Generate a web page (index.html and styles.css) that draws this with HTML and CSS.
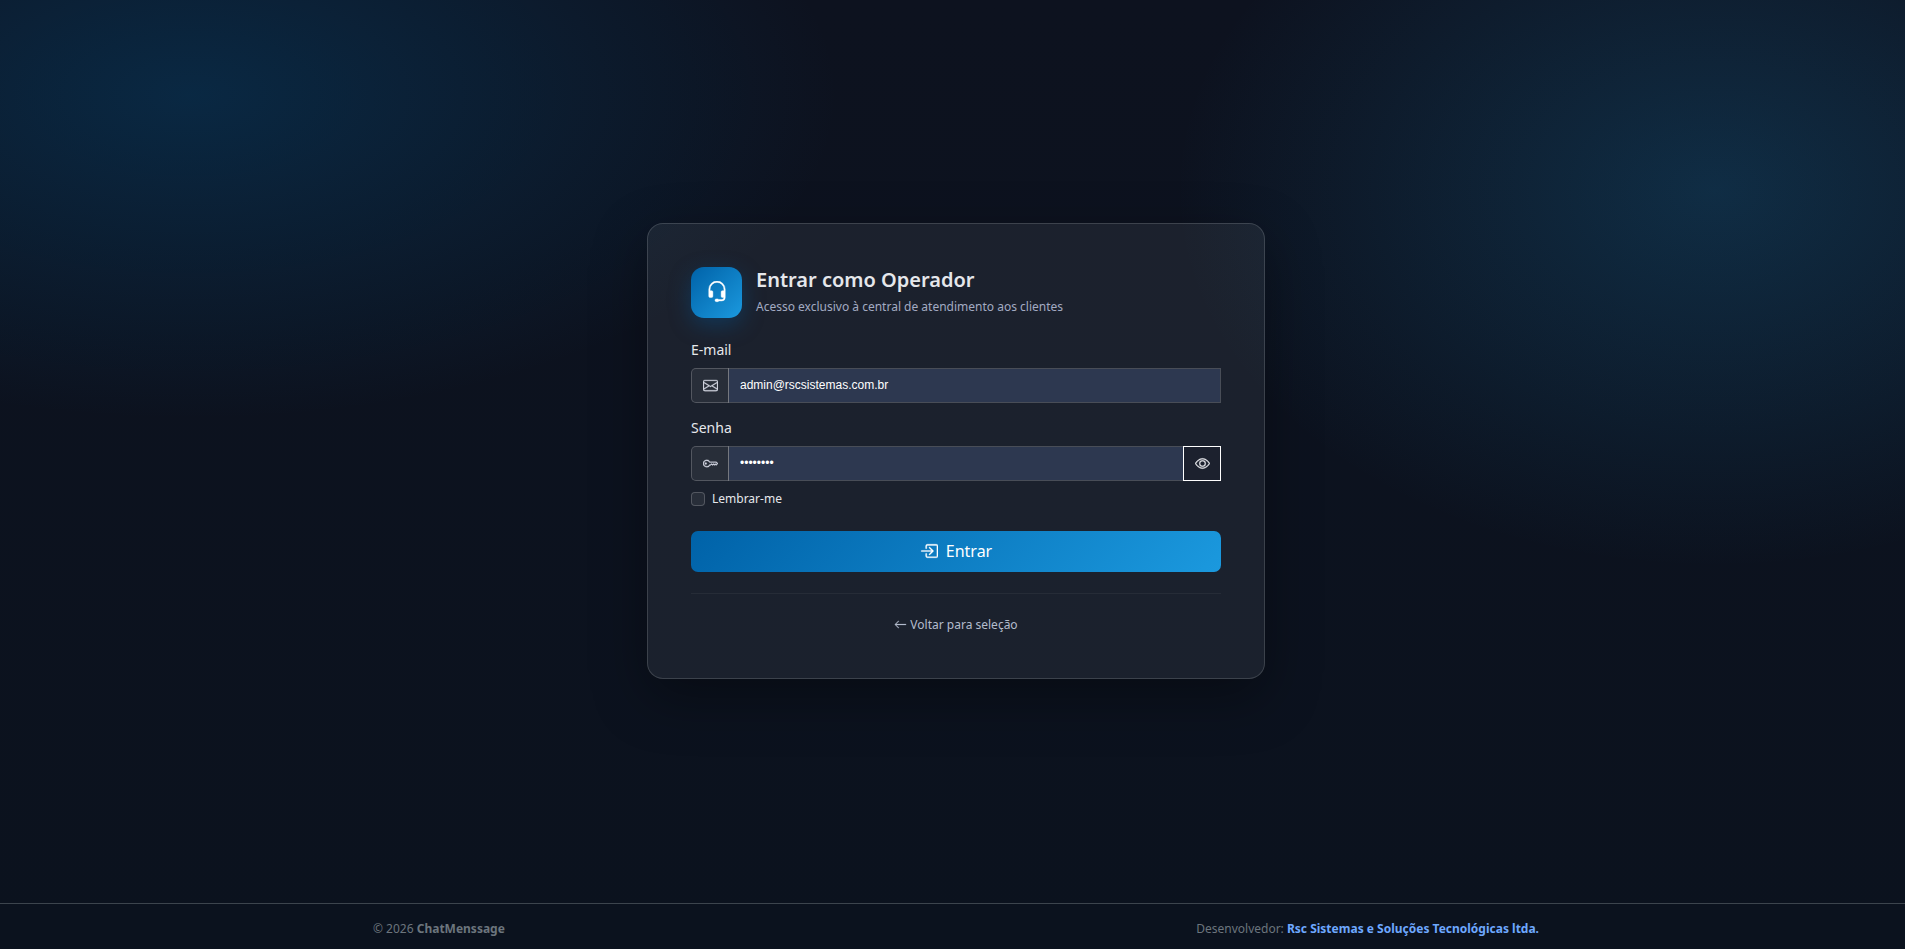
FILE: index.html
```html
<!DOCTYPE html>
<html lang="pt-BR">
<head>
<meta charset="UTF-8">
<meta name="viewport" content="width=device-width, initial-scale=1.0">
<title>Entrar como Operador</title>
<link rel="stylesheet" href="styles.css">
</head>
<body>
<main class="page">
  <section class="card">
    <header class="card-header">
      <div class="brand-icon">
        <svg class="icon" viewBox="0 0 16 16"><path d="M8 1a5 5 0 0 0-5 5v1h1a1 1 0 0 1 1 1v3a1 1 0 0 1-1 1H3a1 1 0 0 1-1-1V6a6 6 0 1 1 12 0v6a2.500 2.500 0 0 1-2.500 2.500H9.366a1 1 0 0 1-.866.5h-1a1 1 0 1 1 0-2h1a1 1 0 0 1 .866.5H11.500A1.500 1.500 0 0 0 13 12h-1a1 1 0 0 1-1-1V8a1 1 0 0 1 1-1h1V6a5 5 0 0 0-5-5"/></svg>
      </div>
      <div>
        <h1 class="title">Entrar como Operador</h1>
        <p class="subtitle">Acesso exclusivo à central de atendimento aos clientes</p>
      </div>
    </header>

    <form>
      <div class="field">
        <label class="label" for="email">E-mail</label>
        <div class="input-group">
          <span class="addon">
            <svg class="icon" viewBox="0 0 16 16"><path d="M0 4a2 2 0 0 1 2-2h12a2 2 0 0 1 2 2v8a2 2 0 0 1-2 2H2a2 2 0 0 1-2-2zm2-1a1 1 0 0 0-1 1v.217l7 4.200 7-4.200V4a1 1 0 0 0-1-1zm13 2.383-4.708 2.825L15 11.105zm-.034 6.876-5.640-3.471L8 9.583l-1.326-.795-5.640 3.470A1 1 0 0 0 2 13h12a1 1 0 0 0 .966-.741M1 11.105l4.708-2.897L1 5.383z"/></svg>
          </span>
          <input class="input" type="email" id="email" value="admin@rscsistemas.com.br">
        </div>
      </div>

      <div class="field">
        <label class="label" for="password">Senha</label>
        <div class="input-group">
          <span class="addon">
            <svg class="icon" viewBox="0 0 16 16"><path d="M0 8a4 4 0 0 1 7.465-2H14a.5.5 0 0 1 .354.146l1.500 1.500a.5.5 0 0 1 0 .708l-1.500 1.500a.5.5 0 0 1-.708 0L13 9.207l-.646.647a.5.5 0 0 1-.708 0L11 9.207l-.646.647a.5.5 0 0 1-.708 0L9 9.207l-.646.647A.5.5 0 0 1 8 10h-.535A4 4 0 0 1 0 8m4-3a3 3 0 1 0 2.712 4.285A.5.5 0 0 1 7.163 9h.63l.853-.854a.5.5 0 0 1 .708 0l.646.647.646-.647a.5.5 0 0 1 .708 0l.646.647.646-.647a.5.5 0 0 1 .708 0l.646.647.793-.793-1-1h-6.630a.5.5 0 0 1-.451-.285A3 3 0 0 0 4 5"/><path d="M4 8a1 1 0 1 1-2 0 1 1 0 0 1 2 0"/></svg>
          </span>
          <input class="input" type="password" id="password" value="12345678">
          <button class="toggle" type="button" id="togglePassword" aria-label="Mostrar senha">
            <svg class="icon" viewBox="0 0 16 16"><path d="M16 8s-3-5.500-8-5.500S0 8 0 8s3 5.500 8 5.500S16 8 16 8M1.173 8a13 13 0 0 1 1.660-2.043C4.120 4.668 5.880 3.500 8 3.500s3.879 1.168 5.168 2.457A13 13 0 0 1 14.828 8q-.086.13-.195.288c-.335.48-.83 1.120-1.465 1.755C11.879 11.332 10.119 12.500 8 12.500s-3.879-1.168-5.168-2.457A13 13 0 0 1 1.172 8z"/><path d="M8 5.500a2.500 2.500 0 1 0 0 5 2.500 2.500 0 0 0 0-5M4.500 8a3.500 3.500 0 1 1 7 0 3.500 3.500 0 0 1-7 0"/></svg>
          </button>
        </div>
      </div>

      <div class="remember">
        <input class="check" type="checkbox" id="remember">
        <label for="remember">Lembrar-me</label>
      </div>

      <button class="submit" type="submit">
        <svg class="icon" viewBox="0 0 16 16"><path d="M6 3.500a.5.5 0 0 1 .5-.5h8a.5.5 0 0 1 .5.5v9a.5.5 0 0 1-.5.5h-8a.5.5 0 0 1-.5-.5v-2a.5.5 0 0 0-1 0v2A1.500 1.500 0 0 0 6.500 14h8a1.500 1.500 0 0 0 1.500-1.500v-9A1.500 1.500 0 0 0 14.500 2h-8A1.500 1.500 0 0 0 5 3.500v2a.5.5 0 0 0 1 0z"/><path d="M11.854 8.354a.5.5 0 0 0 0-.708l-3-3a.5.5 0 1 0-.708.708L10.293 7.500H1.500a.5.5 0 0 0 0 1h8.793l-2.147 2.146a.5.5 0 0 0 .708.708z"/></svg>
        Entrar
      </button>
    </form>

    <hr class="divider">
    <a class="back" href="#">
      <svg class="icon" viewBox="0 0 16 16"><path d="M15 8a.5.5 0 0 0-.5-.5H2.707l3.147-3.146a.5.5 0 1 0-.708-.708l-4 4a.5.5 0 0 0 0 .708l4 4a.5.5 0 0 0 .708-.708L2.707 8.500H14.500A.5.5 0 0 0 15 8"/></svg>
      Voltar para seleção
    </a>
  </section>
</main>

<footer class="footer">
  <div class="footer-inner">
    <span>© 2026 <strong>ChatMenssage</strong></span>
    <span>Desenvolvedor: <a class="dev-link" href="#">Rsc Sistemas e Soluções Tecnológicas ltda.</a></span>
  </div>
</footer>

<script>
  document.getElementById("togglePassword").addEventListener("click", function () {
    var input = document.getElementById("password");
    input.type = input.type === "password" ? "text" : "password";
  });
</script>
</body>
</html>
```
FILE: styles.css
```css
* {
  box-sizing: border-box;
}

body {
  margin: 0;
  min-height: 100vh;
  display: flex;
  flex-direction: column;
  font-family: "Segoe UI", "Noto Sans", sans-serif;
  font-size: 14px;
  line-height: 20px;
  color: #e5e7eb;
  background:
    radial-gradient(1080px 540px at 10% 10%, rgba(0, 98, 160, 0.28), transparent 60%),
    radial-gradient(900px 630px at 90% 20%, rgba(27, 153, 220, 0.2), transparent 60%),
    linear-gradient(180deg, #0d121f, #0b121e);
}

.icon {
  width: 15px;
  height: 15px;
  fill: currentColor;
  stroke: currentColor;
  stroke-width: 0.3;
  flex: none;
}

.page {
  flex: 1;
  display: flex;
  align-items: center;
  justify-content: center;
  padding: 0 0 2px 7px;
}

.card {
  width: 100%;
  max-width: 618px;
  padding: 43px;
  border: 1px solid rgba(255, 255, 255, 0.15);
  border-radius: 16px;
  background: rgba(245, 255, 255, 0.065);
  box-shadow: 0 18px 54px rgba(0, 0, 0, 0.35);
}

.card-header {
  display: flex;
  align-items: center;
  gap: 14px;
  margin-bottom: 21px;
}

.brand-icon {
  width: 51px;
  height: 51px;
  display: flex;
  align-items: center;
  justify-content: center;
  border-radius: 13px;
  color: #fff;
  background: linear-gradient(135deg, #0062a8, #1b99de);
  box-shadow: 0 7px 22px rgba(0, 98, 168, 0.35);
}

.brand-icon .icon {
  width: 22px;
  height: 22px;
}

.title {
  margin: 0 0 4px;
  font-size: 20px;
  font-weight: 600;
  line-height: 26px;
}

.subtitle {
  margin: 0;
  font-size: 12px;
  color: #a3abc2;
}

.field {
  margin-bottom: 14px;
}

.label {
  display: block;
  margin-bottom: 7px;
  line-height: 22px;
}

.input-group {
  display: flex;
  height: 35px;
}

.addon {
  width: 38px;
  display: flex;
  align-items: center;
  justify-content: center;
  color: #d5d8e4;
  border: 1px solid rgba(255, 255, 255, 0.2);
  border-radius: 5px 0 0 5px;
  background: rgba(255, 255, 255, 0.06);
}

.input {
  flex: 1;
  min-width: 0;
  margin-left: -1px;
  padding: 0 11px;
  border: 1px solid rgba(255, 255, 255, 0.2);
  border-radius: 0;
  outline: none;
  background: #2d3850;
  background-clip: padding-box;
  color: #fff;
  font-family: "Liberation Sans", Arial, sans-serif;
  font-size: 12px;
}

.toggle {
  width: 38px;
  margin-left: -1px;
  padding: 0;
  display: flex;
  align-items: center;
  justify-content: center;
  border: 1px solid #fff;
  background: #1c212e;
  color: #e5e7eb;
  cursor: pointer;
}

.remember {
  display: flex;
  align-items: center;
  gap: 7px;
  margin-top: -6px;
  margin-bottom: 22px;
  font-size: 12px;
}

.check {
  appearance: none;
  width: 14px;
  height: 14px;
  margin: 0;
  border: 1px solid rgba(255, 255, 255, 0.2);
  border-radius: 4px;
  background: rgba(255, 255, 255, 0.06);
}

.check:checked {
  background: #1b99de;
}

.submit {
  width: 100%;
  height: 41px;
  display: flex;
  align-items: center;
  justify-content: center;
  gap: 8px;
  border: 0;
  border-radius: 7px;
  background: linear-gradient(135deg, #0062a8, #1b99de);
  color: #fff;
  font-family: inherit;
  font-size: 16px;
  cursor: pointer;
}

.submit .icon {
  width: 18px;
  height: 18px;
}

.divider {
  margin: 21px 0;
  border: 0;
  border-top: 1px solid rgba(255, 255, 255, 0.05);
}

.back {
  display: flex;
  align-items: center;
  justify-content: center;
  gap: 3px;
  font-size: 12px;
  color: #b3bccc;
  text-decoration: none;
}

.back .icon {
  width: 13px;
  height: 13px;
}

.footer {
  border-top: 1px solid #3c444d;
  padding: 15px 0 10px 7px;
  font-size: 12px;
  color: #6c757d;
  background: #0b121e;
}

.footer-inner {
  max-width: 1188px;
  margin: 0 auto;
  padding: 0 11px;
  display: flex;
  justify-content: space-between;
}

.dev-link {
  color: #6ea8fe;
  font-weight: 700;
  text-decoration: none;
}
```
